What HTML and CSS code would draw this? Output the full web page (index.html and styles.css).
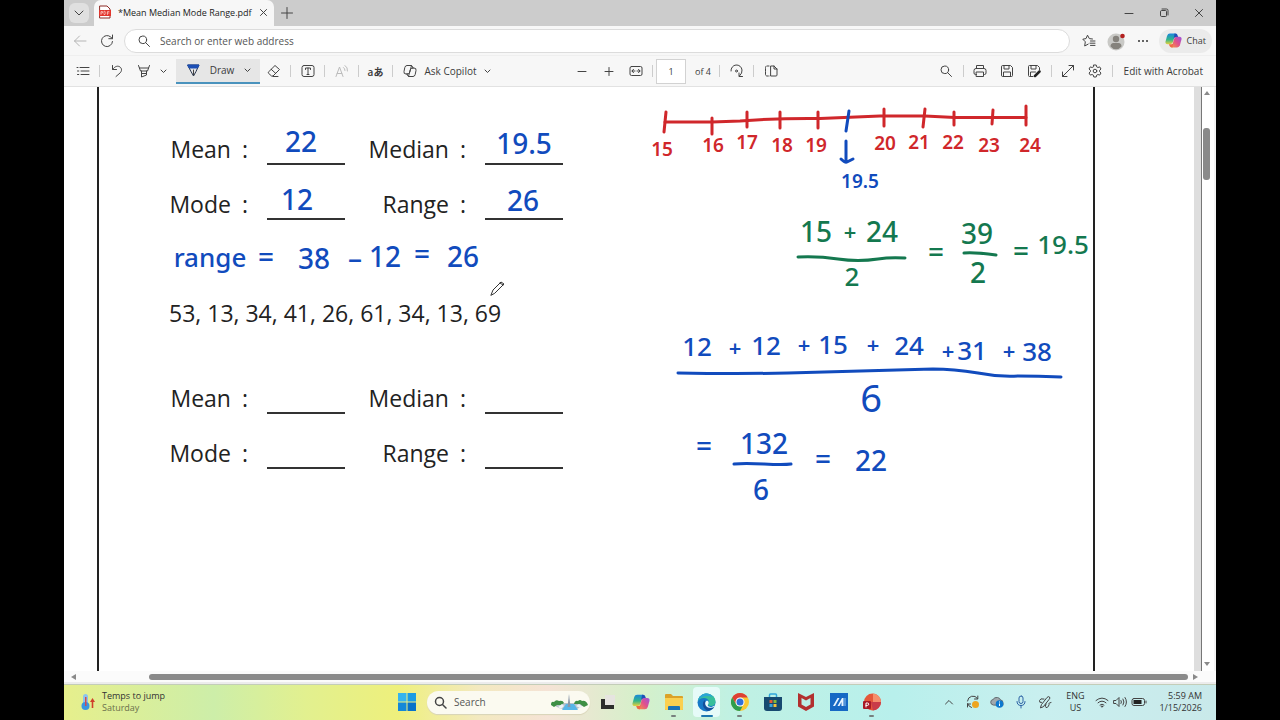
FILE: index.html
```html
<!DOCTYPE html>
<html lang="en">
<head>
    <meta charset="UTF-8">
    <title>*Mean Median Mode Range.pdf</title>
    <link rel="stylesheet" href="styles.css">
</head>
<body>

<!-- Tab strip -->
<header class="tab-strip">
    <button class="tab-menu" aria-label="Tab actions">
        <svg width="12" height="12" viewBox="0 0 12 12"><path d="M2 4l4 4 4-4"/></svg>
    </button>
    <div class="tab">
        <svg class="pdf-icon" width="12" height="14" viewBox="0 0 12 14">
            <path d="M1 1h7l3 3v9H1z" fill="#fff" stroke="#8d2a25"/>
            <path d="M0 5h12v6H0z" fill="#e2352d" stroke="none"/>
            <path d="M2 9.500V6.500h1.500v1.500H2M5 6.500v3h1l.7-1v-1L6 6.500zM8.500 9.500v-3H10M8.500 8H10" stroke="#ffd0cc" stroke-width=".7"/>
        </svg>
        <span class="tab-title">*Mean Median Mode Range.pdf</span>
        <button class="plain" aria-label="Close tab">
            <svg width="9" height="9" viewBox="0 0 9 9"><path d="M1.500 1.500l6 6M7.500 1.500l-6 6"/></svg>
        </button>
    </div>
    <button class="new-tab plain" aria-label="New tab">
        <svg width="12" height="12" viewBox="0 0 12 12"><path d="M6 .5v11M.5 6h11"/></svg>
    </button>
    <div class="window-buttons">
        <button class="plain" aria-label="Minimize"><svg width="10" height="10" viewBox="0 0 10 10"><path d="M1 5.500h8"/></svg></button>
        <button class="plain" aria-label="Restore"><svg width="10" height="10" viewBox="0 0 10 10"><path d="M1.500 3.500q0-1 1-1h4q1 0 1 1v4q0 1-1 1h-4q-1 0-1-1zM3 1h4.500Q9 1 9 2.500V7"/></svg></button>
        <button class="plain" aria-label="Close"><svg width="10" height="10" viewBox="0 0 10 10"><path d="M1.500 1.500l7 7M8.500 1.500l-7 7"/></svg></button>
    </div>
</header>

<!-- Address bar -->
<nav class="address-bar">
    <button class="plain back" aria-label="Back"><svg width="14" height="14" viewBox="0 0 14 14"><path d="M13 7H1.500M6.500 2l-5 5 5 5"/></svg></button>
    <button class="plain" aria-label="Refresh"><svg width="14" height="14" viewBox="0 0 14 14"><path d="M12.500 7.500a5.500 5.500 0 1 1-1.700-4.400l1.500 1.400M12.500 1v3.700H8.800"/></svg></button>
    <div class="address-box">
        <svg width="12" height="12" viewBox="0 0 12 12"><circle cx="4.800" cy="4.800" r="3.800"/><path d="M7.500 7.500l4 4"/></svg>
        <input type="text" aria-label="Address" placeholder="Search or enter web address">
    </div>
    <button class="plain" aria-label="Favorites"><svg width="14" height="14" viewBox="0 0 14 14"><path d="M10.500 5L7.300 4.600 5.500 1.200 4 4.600.8 5.200 3.300 7.800 2.700 12l3.500-1.900M8.500 7h4.500M8 9.200h5M8.500 11.400h4.500"/></svg></button>
    <button class="plain" aria-label="Profile">
        <svg width="20" height="20" viewBox="0 0 20 20" class="filled"><circle cx="10" cy="11" r="8.500" fill="#c9c9c6"/><circle cx="10" cy="8" r="3.200" fill="#85827c"/><path d="M4.500 15.500q0-3.500 3-3.500h5q3 0 3 3.500a7 7 0 0 1-11 0z" fill="#85827c"/><circle cx="16.500" cy="5" r="2.300" fill="#b3201f"/></svg>
    </button>
    <button class="plain" aria-label="More"><svg width="12" height="4" viewBox="0 0 12 4" class="filled"><circle cx="2" cy="2" r="1" fill="#333"/><circle cx="6" cy="2" r="1" fill="#333"/><circle cx="10" cy="2" r="1" fill="#333"/></svg></button>
    <button class="chat">
        <svg width="17" height="17" viewBox="0 0 16 16" class="filled"><use href="#copilot"/></svg>
        Chat
    </button>
</nav>

<!-- PDF toolbar -->
<div class="toolbar">
    <button class="tool" aria-label="Contents"><svg width="14" height="14" viewBox="0 0 14 14"><path d="M4 3.500h9M5 7h8M5 10.500h8M1 3.500h1M1.500 7h1.300M1.500 10.500h1.300"/></svg></button>
    <span class="sep"></span>
    <button class="tool" aria-label="Undo"><svg width="14" height="14" viewBox="0 0 14 14"><path d="M2.500 1.500v4h4M2.800 5.300C5 2 8 1.500 10 3s2 4 0 6l-4 3.500"/></svg></button>
    <button class="tool" aria-label="Highlight"><svg width="14" height="14" viewBox="0 0 14 14"><path d="M1.500 1.500L3.500 7h7l2-5.500M2.500 4h9M4.500 7v2.500h5V7M4.500 9.500v3.500l5-2V9.500"/></svg></button>
    <button class="narrow" aria-label="Highlight options"><svg width="7" height="7" viewBox="0 0 7 7"><path d="M1 2l2.500 2.500L6 2"/></svg></button>
    <button class="draw">
        <svg width="13" height="13" viewBox="0 0 13 13"><path d="M1 1h11L9 7.500 6.500 12 4 7.500z" stroke="#27364f"/><path d="M1 1h11l-1.500 3h-8z" fill="#1c4fb5" stroke="#1c4fb5"/><path d="M6.500 6v5"/></svg>
        <span>Draw</span>
        <svg width="7" height="7" viewBox="0 0 7 7"><path d="M1 2l2.500 2.500L6 2"/></svg>
    </button>
    <button class="tool" aria-label="Erase"><svg width="14" height="14" viewBox="0 0 14 14"><path d="M1.500 8L8 1.500l4.500 4L6 12H4.500l-3-2.800zM4.200 5.300L8.800 9.500M6 12.500h5"/></svg></button>
    <span class="sep"></span>
    <button class="tool" aria-label="Add text"><svg width="14" height="14" viewBox="0 0 14 14"><rect x="1" y="1.500" width="12" height="11" rx="2"/><path d="M4.500 5.500V4h5v1.500M7 4v6.500M6 10.500h2"/></svg></button>
    <span class="sep"></span>
    <button class="tool faded" aria-label="Read aloud"><svg width="14" height="14" viewBox="0 0 14 14"><path d="M1 12.500L4.500 3 8 12.500M2.200 9.500h4.600M8.500 3.500q1.500 1 1.500 3M10 1.500q3 2 2.500 5.500"/></svg></button>
    <span class="sep"></span>
    <button class="tool translate" aria-label="Translate">aあ</button>
    <span class="sep"></span>
    <button class="ask">
        <svg width="14" height="14" viewBox="0 0 14 14"><path d="M4 10H3q-2.500 0-2-2.500l.8-4Q2.300 1.500 4 1.500h4.500L6.800 8.200Q6.300 10 4 10M10 4h1q2.500 0 2 2.500l-.8 4q-.5 2-2.200 2H5.500l1.700-6.700Q7.700 4 10 4M8.500 1.500q1 0 1.500 2.500M5.500 12.500Q4.500 12.500 4 10"/></svg>
        <span>Ask Copilot</span>
        <svg width="7" height="7" viewBox="0 0 7 7"><path d="M1 2l2.500 2.500L6 2"/></svg>
    </button>

    <div class="page-tools">
        <button class="tool" aria-label="Zoom out"><svg width="10" height="10" viewBox="0 0 10 10"><path d="M1 5.500h8"/></svg></button>
        <button class="tool" aria-label="Zoom in"><svg width="10" height="10" viewBox="0 0 10 10"><path d="M1 5.500h8M5 1.500v8"/></svg></button>
        <button class="tool" aria-label="Fit to width"><svg width="14" height="14" viewBox="0 0 14 14"><rect x="1" y="2.500" width="12" height="9" rx="1.500"/><path d="M3 7h3M8 7h3M4.500 5.300L3 7l1.500 1.700M9.500 5.300L11 7 9.500 8.700"/></svg></button>
        <span class="sep"></span>
        <input class="page-number" type="text" id="pageNumber" value="1" aria-label="Page">
        <label class="page-count" for="pageNumber">of 4</label>
        <span class="sep"></span>
        <button class="tool" aria-label="Rotate"><svg width="14" height="14" viewBox="0 0 14 14"><path d="M1 7a5.500 5.500 0 0 1 11-1q.5 3-2.500 6M9 9v3.500h3.500"/><circle cx="6.500" cy="7" r="1"/></svg></button>
        <span class="sep"></span>
        <button class="tool" aria-label="Page view"><svg width="14" height="14" viewBox="0 0 14 14"><path d="M7 2h3l3 3v6q0 1-1 1H7zM10 2v3h3"/><path d="M5 2H3Q1.500 2 1.500 3.500v7Q1.500 12 3 12h2" stroke-dasharray="2 1"/></svg></button>
    </div>

    <div class="file-tools">
        <button class="tool" aria-label="Find"><svg width="12" height="12" viewBox="0 0 12 12"><circle cx="4.800" cy="4.800" r="3.800"/><path d="M7.500 7.500l4 4"/></svg></button>
        <span class="sep"></span>
        <button class="tool" aria-label="Print"><svg width="14" height="14" viewBox="0 0 14 14"><path d="M3.500 4.500v-3h7v3M3.500 10.500H2.500q-1.500 0-1.500-1.500V6.500q0-2 2-2h8q2 0 2 2V9q0 1.500-1.500 1.500h-1M3.500 8h7v4.500h-7z"/></svg></button>
        <button class="tool" aria-label="Save"><svg width="14" height="14" viewBox="0 0 14 14"><path d="M1.500 2.500q0-1 1-1h8l2 2v8q0 1-1 1h-9q-1 0-1-1zM4 1.500v3.500h5V1.500M3.500 12.500V8h7v4.500"/></svg></button>
        <button class="tool" aria-label="Save as"><svg width="14" height="14" viewBox="0 0 14 14"><path d="M6 12.500H2.500q-1 0-1-1v-9q0-1 1-1h8l2 2V6M4 1.500v3.500h5V1.500M3.500 12.500V8h5"/><path d="M8 12l4.500-4.500" stroke="#222" stroke-width="2.500"/></svg></button>
        <span class="sep"></span>
        <button class="tool" aria-label="Full screen"><svg width="14" height="14" viewBox="0 0 14 14"><path d="M1.500 12.500l11-11M8 1.500h4.500V6M1.500 8v4.500H6"/></svg></button>
        <button class="tool" aria-label="Settings"><svg width="14" height="14" viewBox="0 0 14 14"><path d="M5.800 1h2.400l.5 1.900 1.200.6 1.800-.6L13 5l-1.400 1.300v1.400L13 9l-1.300 2.100-1.800-.6-1.200.6-.5 1.900H5.800l-.5-1.900-1.200-.6-1.800.6L1 9l1.400-1.300V6.300L1 5l1.300-2.100 1.800.6 1.200-.6z"/><circle cx="7" cy="7" r="1.800"/></svg></button>
        <span class="sep"></span>
        <button class="acrobat">Edit with Acrobat</button>
    </div>
</div>

<!-- Document -->
<main class="viewer">
    <div class="viewer-row">
        <div class="pdf-page">
            <div class="sheet">
                <div class="answers">
                    <span class="name">Mean<b>:</b></span><span class="blank"></span>
                    <span class="name">Median<b>:</b></span><span class="blank"></span>
                    <span class="name">Mode<b>:</b></span><span class="blank"></span>
                    <span class="name">Range<b>:</b></span><span class="blank"></span>
                </div>
                <p class="numbers">53, 13, 34, 41, 26, 61, 34, 13, 69</p>
                <div class="answers">
                    <span class="name">Mean<b>:</b></span><span class="blank"></span>
                    <span class="name">Median<b>:</b></span><span class="blank"></span>
                    <span class="name">Mode<b>:</b></span><span class="blank"></span>
                    <span class="name">Range<b>:</b></span><span class="blank"></span>
                </div>
            </div>

            <!-- Pen annotations -->
            <svg class="ink" width="1130" height="584" viewBox="64 87 1130 584">
                <g class="blue large">
                    <text x="301" y="152">22</text>
                    <text x="524" y="154">19.5</text>
                    <text x="297" y="210">12</text>
                    <text x="523" y="211">26</text>
                    <text class="word" x="210" y="267">range</text>
                    <text x="266" y="267">=</text>
                    <text x="314" y="269">38</text>
                    <text x="355" y="269">–</text>
                    <text x="385" y="267">12</text>
                    <text x="422" y="264">=</text>
                    <text x="463" y="267">26</text>
                </g>

                <g class="red small">
                    <path d="M665 122H712L740 121Q780 118 820 118.500L880 116H925L955 117.500H1026"/>
                    <path d="M666 112L664 132M712 118v16M747 112v15M780 112v16M818 112v16M884 109v17M925 109l-2 18M954 112v13M993 110l-1 14M1026 106v19"/>
                    <text x="662" y="156">15</text>
                    <text x="713" y="152">16</text>
                    <text x="747" y="149">17</text>
                    <text x="782" y="152">18</text>
                    <text x="816" y="152">19</text>
                    <text x="885" y="150">20</text>
                    <text x="919" y="149">21</text>
                    <text x="953" y="149">22</text>
                    <text x="989" y="152">23</text>
                    <text x="1030" y="152">24</text>
                </g>
                <g class="blue small">
                    <path d="M849 111l-3 20M846 141v21M841 159q4 4 6 3l6-3"/>
                    <text x="860" y="188">19.5</text>
                </g>

                <g class="green large">
                    <text x="816" y="242">15</text>
                    <text class="plus" x="850" y="240">+</text>
                    <text x="882" y="242">24</text>
                    <path d="M798 257q20-1 40 2t40 0q12-2 27-1"/>
                    <text class="low" x="852" y="286">2</text>
                    <text x="936" y="262">=</text>
                    <text x="977" y="244">39</text>
                    <path d="M964 253q10-1 32 2"/>
                    <text x="978" y="283">2</text>
                    <text x="1021" y="261">=</text>
                    <text class="low" x="1063" y="254">19.5</text>
                </g>

                <g class="blue large sum">
                    <text x="697" y="356">12</text>
                    <text class="plus" x="735" y="356">+</text>
                    <text x="766" y="355">12</text>
                    <text class="plus" x="804" y="353">+</text>
                    <text x="833" y="354">15</text>
                    <text class="plus" x="873" y="353">+</text>
                    <text x="909" y="355">24</text>
                    <text class="plus" x="948" y="359">+</text>
                    <text x="972" y="360">31</text>
                    <text class="plus" x="1009" y="359">+</text>
                    <text x="1037" y="361">38</text>
                    <path d="M678 373q60 1 110 0 80-2 145-4 20 0 45 4 20 4 40 3 20 0 43 1"/>
                    <text class="tall" x="871" y="412">6</text>
                </g>
                <g class="blue large">
                    <text x="704" y="456">=</text>
                    <text x="764" y="454">132</text>
                    <path d="M734 464q10-1 30 0t27 0"/>
                    <text x="761" y="500">6</text>
                    <text x="823" y="469">=</text>
                    <text x="871" y="471">22</text>
                </g>

                <g class="pen">
                    <path d="M491 295l2-5 8-8 3 2-9 9zM500 283l3 2"/>
                </g>
            </svg>
        </div>
        <div class="page-edge"></div>
        <div class="scroll-y">
            <span class="arrow up"></span>
            <span class="thumb"></span>
            <span class="arrow down"></span>
        </div>
    </div>
    <div class="scroll-x">
        <span class="arrow left"></span>
        <span class="thumb"></span>
        <span class="arrow right"></span>
    </div>
</main>

<!-- Taskbar -->
<footer class="taskbar">
    <div class="weather">
        <svg width="14" height="18" viewBox="0 0 14 18" class="filled"><rect x="2" y="1" width="5" height="12" rx="2.500" fill="#8cc4ee"/><circle cx="4.500" cy="13" r="4" fill="#3a96e0"/><path d="M4 4h1.500v9H4z" fill="#d04a52"/><path d="M11.500 5l2.500 4h-1.700v6h-1.600V9H9z" fill="#d0402a"/></svg>
        <div>
            <div class="weather-title">Temps to jump</div>
            <div class="weather-day">Saturday</div>
        </div>
    </div>

    <div class="apps">
        <button class="app" aria-label="Start"><svg width="18" height="18" viewBox="0 0 18 18" class="filled"><path d="M0 0h8.500v8.500H0z" fill="#35b4ee"/><path d="M9.500 0H18v8.500H9.500z" fill="#1b9ce4"/><path d="M0 9.500h8.500V18H0z" fill="#1488d8"/><path d="M9.500 9.500H18V18H9.500z" fill="#0872c9"/></svg></button>
        <div class="task-search">
            <svg width="13" height="13" viewBox="0 0 13 13"><circle cx="5.500" cy="5.500" r="4" stroke-width="1.500"/><path d="M8.500 8.500l3.500 3.500" stroke-width="1.500"/></svg>
            <input type="text" aria-label="Search" placeholder="Search">
            <svg width="37" height="18" viewBox="0 0 37 18" class="filled">
                <path d="M3 10h31l-2 3-6 3H10l-6-3z" fill="#b9c2ca"/>
                <path d="M15 11h8l4 6H11z" fill="#58b6e8"/>
                <path d="M18 1l1.500 13h-3z" fill="#8b98a8"/>
                <path d="M0 12q0-4 3-3 2-3 5-1 4-1 5 2l-3 2H6l-3 2zM23 11q1-4 4-3 2-2 4 0 4-1 6 4l-4 2-4-3z" fill="#3e8f45"/>
                <path d="M7 14l4-3 2 2-3 3zM25 13l3-2 4 3-3 1z" fill="#eef3f4"/>
            </svg>
        </div>
        <button class="app" aria-label="Task view"><svg width="16" height="16" viewBox="0 0 16 16" class="filled"><path d="M5 1h10v10H5z" fill="#e6e4e0"/><path d="M1 5h4v6h9v4H1z" fill="#2d2d2d"/></svg></button>
        <button class="app" aria-label="Copilot"><svg width="18" height="18" viewBox="0 0 16 16" class="filled"><use href="#copilot"/></svg></button>
        <button class="app running" aria-label="File Explorer"><svg width="18" height="18" viewBox="0 0 18 18" class="filled"><path d="M0 2q0-1 1-1h5l2 2h9q1 0 1 1v12q0 1-1 1H1q-1 0-1-1z" fill="#dba229"/><path d="M0 5h18v11q0 1-1 1H1q-1 0-1-1z" fill="#fbd04f"/><path d="M3 17v-3q0-1 1-1h10q1 0 1 1v3z" fill="#1d74b5"/></svg></button>
        <button class="app current" aria-label="Edge"><svg width="19" height="19" viewBox="0 0 19 19" class="filled"><circle cx="9.500" cy="9.500" r="9" fill="#1679c8"/><path d="M.8 8C2 3 5.500.5 9.500.5c5 0 9 3.700 9 8 0 3-2 4.500-4.500 4.500-2 0-3-.8-3-1.500s.8-1 .8-2.500C11.800 6.500 9.500 5 7 5 4 5 1.800 6.500.8 8z" fill="#37bf9b"/><path d="M.8 8C2 3 5.500.5 9.500.5c3 0 5 1.500 6 3.500C10 2 4 3 .8 8z" fill="#2ba5d6"/><path d="M8 7c-4 3-2 9 3 11 3-.5 5.500-2.500 6.500-4.500-4 2.500-9 .5-9.500-3.500z" fill="#144f9b"/><path d="M11 11.500c-1 1 1 2.500 3.500 2.500l3.500-1.500-.5 1.500c-3 1.500-8 1-9-2-.8-2 0-4 1.500-4.500 2 1 2 2.500 1 4z" fill="#e8fbfb"/></svg></button>
        <button class="app running" aria-label="Chrome"><svg width="18" height="18" viewBox="0 0 18 18" class="filled"><circle cx="9" cy="9" r="9" fill="#f9c932"/><path d="M9 0a9 9 0 0 1 7.800 4.500H9L5.100 11.300 1.200 4.500A9 9 0 0 1 9 0z" fill="#dd4034"/><path d="M1.200 4.500L5.100 11.300 9 13.500h2.500L9 18A9 9 0 0 1 1.200 4.500z" fill="#2e9e4f"/><circle cx="9" cy="9" r="4.500" fill="#fff"/><circle cx="9" cy="9" r="3.500" fill="#2f70da"/></svg></button>
        <button class="app" aria-label="Microsoft Store"><svg width="18" height="18" viewBox="0 0 18 18" class="filled"><path d="M5.500 5V2q0-1 1-1h5q1 0 1 1v3" fill="none" stroke="#32a7da" stroke-width="1.500"/><path d="M0 4h18v11q0 3-3 3H3q-3 0-3-3z" fill="#174a70"/><path d="M5.500 7h3v3h-3z" fill="#e45d35"/><path d="M9.500 7h3v3h-3z" fill="#86b93a"/><path d="M5.500 11h3v3h-3z" fill="#37a6de"/><path d="M9.500 11h3v3h-3z" fill="#f3c13a"/></svg></button>
        <button class="app" aria-label="McAfee"><svg width="16" height="18" viewBox="0 0 16 18" class="filled"><path d="M0 0l8 4 8-4v13.500L8 18l-8-4.500zM3.500 5v6.500L8 14l4.500-2.500V5L8 7.500z" fill="#b2302f" fill-rule="evenodd"/></svg></button>
        <button class="app" aria-label="MyASUS"><svg width="18" height="18" viewBox="0 0 18 18" class="filled"><path d="M0 0h18v18H0z" fill="#1668c4"/><path d="M3 13l4.500-8h2L5 13zM7.500 13L12 5h1.500v8h-2V9l-2 4z" fill="#e8f4ff"/><path d="M14.500 5h1v8h-1z" fill="#8dc0ef"/></svg></button>
        <button class="app running" aria-label="PowerPoint"><svg width="18" height="18" viewBox="0 0 18 18" class="filled"><circle cx="9.500" cy="9" r="8.500" fill="#e5573a"/><path d="M10 .5a8.500 8.500 0 0 1 8 8.500h-8z" fill="#f58e6c"/><path d="M18 9a8.500 8.500 0 0 1-8 8.500L8 9z" fill="#c93c49"/><rect y="8" width="8" height="8" rx="1" fill="#a81926"/><path d="M3 14V10h1.500q1.200 0 1.200 1.200t-1.200 1.200H3" fill="none" stroke="#fff"/></svg></button>
    </div>

    <div class="tray">
        <button class="plain tray-icon" aria-label="Hidden icons"><svg width="10" height="10" viewBox="0 0 10 10"><path d="M1.500 7L5 3.500 8.500 7"/></svg></button>
        <button class="plain tray-icon" aria-label="Update"><svg width="14" height="14" viewBox="0 0 14 14"><path d="M1.500 6a5.500 5.500 0 0 1 10-2.500M11.800 1v3H8.500M1.500 8.500q1 3 4 4M1.500 12v-3h3"/><circle cx="9.500" cy="9.500" r="3.500" fill="#eda51f" stroke="none"/></svg></button>
        <button class="plain tray-icon" aria-label="OneDrive"><svg width="14" height="14" viewBox="0 0 14 14" class="filled"><path d="M3 10a2.800 2.800 0 0 1 0-5.500Q4.500 2 7.500 2.500 10 3 10.500 5 13 5 13 8v2z" fill="#a0a8ad" stroke="#60686d"/><circle cx="9.500" cy="9" r="3.800" fill="#0c78cf"/><path d="M9 8.500h1V11H9zM9 6.500h1v1H9z" fill="#fff"/></svg></button>
        <button class="plain tray-icon mic" aria-label="Microphone"><svg width="12" height="14" viewBox="0 0 12 14"><rect x="4" y="1" width="4" height="7.500" rx="2"/><path d="M2 6.500q0 4 4 4t4-4M6 10.500V13"/></svg></button>
        <button class="plain tray-icon pen-menu" aria-label="Pen menu"><svg width="14" height="14" viewBox="0 0 14 14"><path d="M3.500 7.500Q1 8 1.500 5.500T6 4M2.500 12.500l1-3L9 2.500q1.500-1.500 2.500-.5t-.5 2.500L5.500 11.500zM8 9q-1.500 3 0 3.500t2.500-1.500.5-2.500 2-1"/></svg></button>
        <div class="language">ENG<br>US</div>
        <svg width="14" height="12" viewBox="0 0 14 12"><path d="M1 4.500q6-5 12 0M3 6.800q4-3.500 8 0M5 9q2-1.800 4 0"/><circle cx="7" cy="10.500" r=".7"/></svg>
        <svg width="14" height="12" viewBox="0 0 14 12"><path d="M1 4.500h2l3-3v9l-3-3H1zM8 4.500q1 1.500 0 3M10 3q2 3 0 6M12 1.500q3 4.500 0 9"/></svg>
        <svg width="16" height="10" viewBox="0 0 16 10"><rect x="1" y="1.500" width="12.500" height="7" rx="2"/><path d="M2.500 3h8v4h-8z" fill="#222" stroke="none"/><path d="M15 4v2"/></svg>
        <div class="clock">5:59 AM<br>1/15/2026</div>
    </div>
</footer>

<!-- Shared logo -->
<svg class="symbols" width="0" height="0">
    <defs>
        <linearGradient id="cool" x1="0" y1="0" x2="0" y2="1"><stop offset="0" stop-color="#1b87dc"/><stop offset=".55" stop-color="#30b58b"/><stop offset="1" stop-color="#e8cf3c"/></linearGradient>
        <linearGradient id="warm" x1="1" y1="0" x2="0" y2="1"><stop offset="0" stop-color="#9b52dd"/><stop offset=".5" stop-color="#e1508c"/><stop offset="1" stop-color="#f59346"/></linearGradient>
        <symbol id="copilot" viewBox="0 0 16 16">
            <path d="M4.500 1.500h5.300L7.500 9.500q-.7 2-2.500 2H2.500Q0 11.500.5 9L2 3.500q.6-2 2.500-2z" fill="url(#cool)"/>
            <path d="M9 1.500h1q1.500 0 2 2l.5 1.500H10q-1.500 0-2 1.500z" fill="#1c50b8"/>
            <path d="M11.500 14.500H6.200l2.300-8q.7-2 2.500-2h2.500q2.500 0 2 2.500L14 12.500q-.6 2-2.500 2z" fill="url(#warm)"/>
            <path d="M7 14.500H6q-1.500 0-2-2l-.3-1H6q1.500 0 2-1.500z" fill="#ef6a45"/>
        </symbol>
    </defs>
</svg>

</body>
</html>
```
FILE: styles.css
```css
* {
    box-sizing: border-box;
}

body {
    margin: 0;
    padding: 0 5%;
    height: 100vh;
    display: flex;
    flex-direction: column;
    background-color: #000;
    color: #3b3b3b;
    font-family: "Open Sans", "Noto Sans CJK JP", sans-serif;
    font-size: 10px;
    overflow: hidden;
}

button, input {
    font: inherit;
    color: inherit;
    border: none;
    padding: 0;
    background: none;
}

input {
    outline: none;
}

svg {
    display: block;
    flex: none;
    fill: none;
    stroke: #444;
    stroke-linecap: round;
    stroke-linejoin: round;
}

svg.filled {
    stroke: none;
}

.symbols {
    position: absolute;
}

.plain {
    display: flex;
    align-items: center;
    justify-content: center;
}

/* Tab strip */
.tab-strip {
    display: flex;
    align-items: center;
    height: 26px;
    padding-left: 5px;
    background-color: #ccc;
}

.tab-menu {
    display: flex;
    align-items: center;
    justify-content: center;
    width: 20px;
    height: 20px;
    margin-right: 5px;
    border-radius: 6px;
    background-color: #e0e0e0;
}

.tab {
    display: flex;
    align-items: center;
    gap: 7px;
    width: 180px;
    height: 26px;
    padding: 0 7px 2px 5px;
    border-radius: 7px 7px 0 0;
    background-color: #f7f7f7;
    font-size: 9px;
    color: #222;
}

.tab-title {
    flex: 1;
    white-space: nowrap;
}

.new-tab {
    width: 26px;
}

.window-buttons {
    display: flex;
    margin-left: auto;
}

.window-buttons button {
    width: 35px;
    height: 26px;
}

/* Address bar */
.address-bar {
    display: flex;
    align-items: center;
    height: 29px;
    padding: 0 4px 0 2px;
    background-color: #f7f7f7;
}

.address-bar > .plain {
    width: 27px;
    height: 24px;
}

.back svg {
    stroke: #b5b5b5;
}

.address-box {
    display: flex;
    align-items: center;
    flex: 1;
    gap: 10px;
    height: 24px;
    margin: 0 6px 0 4px;
    padding-left: 13px;
    border: 1px solid #dcdcdc;
    border-radius: 12px;
    background-color: #fff;
}

.address-box input {
    flex: 1;
}

.address-box input::placeholder,
.task-search input::placeholder {
    color: #555;
    opacity: 1;
}

.chat {
    display: flex;
    align-items: center;
    gap: 5px;
    height: 24px;
    margin-left: 2px;
    padding: 0 6px;
    border-radius: 12px;
    background-color: #ebebeb;
    font-size: 9px;
}

/* PDF toolbar */
.toolbar {
    display: flex;
    align-items: center;
    height: 32px;
    padding: 0 13px 0 5px;
    border-top: 1px solid #efefef;
    border-bottom: 1px solid #e2e2e2;
    background-color: #f7f7f7;
}

.tool,
.narrow {
    display: flex;
    align-items: center;
    justify-content: center;
    width: 27px;
    height: 24px;
}

.narrow {
    width: 12px;
}

.faded svg {
    stroke: #bbb;
}

.translate {
    font-weight: 600;
}

.sep {
    width: 1px;
    height: 12px;
    margin: 0 3px;
    background-color: #ccc;
}

.draw {
    display: flex;
    align-items: center;
    justify-content: space-between;
    width: 84px;
    height: 25px;
    margin-left: 7px;
    padding: 0 9px 0 11px;
    border-bottom: 2px solid #4a93bd;
    background-color: #e6e6e6;
}

.ask {
    display: flex;
    align-items: center;
    justify-content: space-between;
    width: 102px;
    height: 24px;
    padding: 0 7px;
}

.page-tools,
.file-tools {
    display: flex;
    align-items: center;
}

.page-tools {
    margin-left: 70px;
}

.file-tools {
    margin-left: auto;
}

.page-number {
    width: 30px;
    height: 25px;
    border: 1px solid #d2d2d2;
    background-color: #fff;
    font-size: 9px;
    text-align: center;
}

.page-count {
    width: 30px;
    padding-left: 9px;
    font-size: 9px;
    white-space: nowrap;
}

.acrobat {
    margin-left: 8px;
    white-space: nowrap;
}

/* Document */
.viewer {
    display: flex;
    flex: 1;
    flex-direction: column;
    min-height: 0;
    border-bottom: 2px solid #ececec;
    background-color: #fff;
}

.viewer-row {
    display: flex;
    flex: 1;
    min-height: 0;
}

.pdf-page {
    position: relative;
    flex: 1;
    padding: 0 99px 0 33px;
    overflow: hidden;
    background-color: #fff;
}

.sheet {
    height: 100%;
    padding: 40px 0 0 70px;
    border: solid #222;
    border-width: 0 2px;
    color: #222;
    font-size: 23px;
}

.answers {
    display: grid;
    grid-template-columns: 80px 78px 104px 78px;
    grid-auto-rows: 38px;
    gap: 17px 18px;
}

.name {
    display: flex;
    align-items: flex-end;
    justify-content: flex-end;
    gap: 11px;
    padding: 0 1px 1px 0;
    line-height: 30px;
}

.name b {
    font-weight: normal;
}

.blank {
    border-bottom: 2px solid #333;
}

.numbers {
    margin: 77px 0 47px;
    line-height: 32px;
}

.ink {
    position: absolute;
    left: 0;
    top: 0;
    stroke-width: 3px;
}

.ink text {
    stroke: none;
    text-anchor: middle;
    font-family: "Noto Sans", sans-serif;
    font-weight: 500;
}

.ink .large {
    font-size: 28px;
}

.ink .sum,
.ink .word,
.ink .low {
    font-size: 26px;
}

.ink .plus {
    font-size: 22px;
    font-weight: 600;
}

.ink .tall {
    font-size: 38px;
    font-weight: 400;
}

.ink .small {
    font-size: 19px;
}

.ink .small text {
    font-weight: 600;
}

.ink .blue {
    stroke: #114bbd;
}

.ink .blue text {
    fill: #114bbd;
}

.ink .red {
    stroke: #d0272b;
}

.ink .red text {
    fill: #d0272b;
}

.ink .green {
    stroke: #14784f;
}

.ink .green text {
    fill: #14784f;
}

.ink .pen {
    stroke: #333;
    stroke-width: 1px;
}

.page-edge {
    width: 8px;
    border-right: 1px solid #777;
    background-color: #dedede;
}

/* Scrollbars */
.scroll-y {
    display: flex;
    flex-direction: column;
    align-items: center;
    width: 14px;
    padding: 4px 3px 5px 0;
    border-right: 2px solid #f3f3f3;
    background-color: #fff;
}

.scroll-y .thumb {
    width: 7px;
    height: 52px;
    margin: 33px 0 auto;
    border-radius: 3px;
    background-color: #8a8a8a;
}

.scroll-x {
    display: flex;
    align-items: center;
    height: 11px;
    padding: 0 18px 0 7px;
    background-color: #fbfbfb;
}

.scroll-x .thumb {
    flex: 1;
    height: 6px;
    margin: 0 5px 0 73px;
    border-radius: 3px;
    background-color: #8a8a8a;
}

.arrow {
    border: 3px solid transparent;
}

.up {
    border-top: none;
    border-bottom: 4px solid #8a8a8a;
}

.down {
    border-top: 4px solid #8a8a8a;
    border-bottom: none;
}

.left {
    border-left: none;
    border-right: 5px solid #8a8a8a;
}

.right {
    border-left: 5px solid #8a8a8a;
    border-right: none;
}

/* Taskbar */
.taskbar {
    display: grid;
    grid-template-columns: 1fr auto 1fr;
    align-items: center;
    height: 36px;
    padding-bottom: 1px;
    border-top: 1px solid #c3cdb8;
    background: linear-gradient(90deg, #e6ef8c, #cdeea9 13%, #e2f08f 21%, #eef07c 29%, #f3e9c0 36%, #f5e3d6 42%, #d5f0ca 50%, #c0f1e3 58%, #b8f0ec 72%, #c9efef 85%, #c9e9ea);
}

.weather {
    display: flex;
    align-items: center;
    gap: 7px;
    padding-left: 17px;
    font-size: 9px;
    line-height: 12px;
}

.weather-title {
    color: #333;
}

.weather-day {
    color: #6b704c;
}

.apps {
    display: flex;
    align-items: center;
    padding-right: 2px;
}

.app {
    position: relative;
    display: flex;
    align-items: center;
    justify-content: center;
    width: 33px;
    height: 30px;
}

.current {
    width: 27px;
    margin: 0 3px;
    border-radius: 4px;
    background-color: #e6fbf8;
}

.running::after,
.current::after {
    content: "";
    position: absolute;
    bottom: 0;
    width: 5px;
    height: 2px;
    border-radius: 1px;
    background-color: #77817f;
}

.current::after {
    width: 12px;
    background-color: #1b76b0;
}

.task-search {
    display: flex;
    align-items: center;
    gap: 7px;
    width: 163px;
    height: 23px;
    margin: 0 1px 0 4px;
    padding: 0 2px 0 7px;
    border-radius: 12px;
    background-color: #fbfaf0;
    box-shadow: 0 1px 1px #d8d4b8;
}

.task-search input {
    flex: 1;
    min-width: 0;
}

.tray {
    display: flex;
    align-items: center;
    justify-content: flex-end;
    gap: 4px;
    padding-right: 14px;
    font-size: 9px;
    line-height: 12px;
    color: #333;
}

.tray-icon {
    width: 20px;
}

.mic svg {
    stroke: #2c62a5;
}

.language {
    width: 32px;
    text-align: center;
}

.clock {
    margin-left: 8px;
    text-align: right;
}
```
